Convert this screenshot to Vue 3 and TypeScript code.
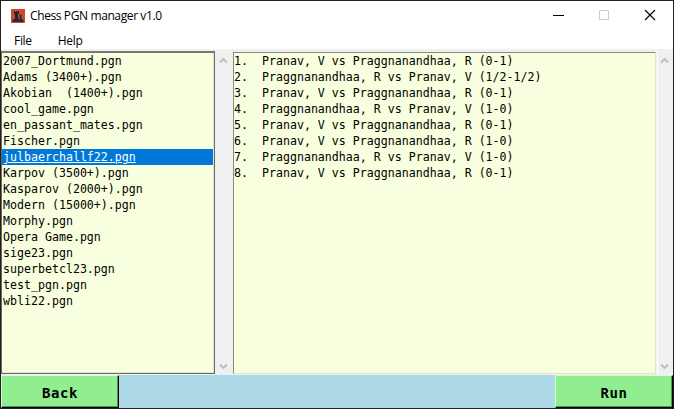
<script setup lang="ts">
import { ref } from 'vue'

const files: string[] = [
  '2007_Dortmund.pgn',
  'Adams (3400+).pgn',
  'Akobian  (1400+).pgn',
  'cool_game.pgn',
  'en_passant_mates.pgn',
  'Fischer.pgn',
  'julbaerchallf22.pgn',
  'Karpov (3500+).pgn',
  'Kasparov (2000+).pgn',
  'Modern (15000+).pgn',
  'Morphy.pgn',
  'Opera Game.pgn',
  'sige23.pgn',
  'superbetcl23.pgn',
  'test_pgn.pgn',
  'wbli22.pgn',
]
const games: string[] = [
  'Pranav, V vs Praggnanandhaa, R (0-1)',
  'Praggnanandhaa, R vs Pranav, V (1/2-1/2)',
  'Pranav, V vs Praggnanandhaa, R (0-1)',
  'Praggnanandhaa, R vs Pranav, V (1-0)',
  'Pranav, V vs Praggnanandhaa, R (0-1)',
  'Pranav, V vs Praggnanandhaa, R (1-0)',
  'Praggnanandhaa, R vs Pranav, V (1-0)',
  'Pranav, V vs Praggnanandhaa, R (0-1)',
]
const selected = ref<number>(6)
const gameLine = (game: string, i: number): string => `${i + 1}.  ${game}`
</script>

<template>
  <div class="window">
    <header class="titlebar">
      <svg class="logo" width="14" height="14" viewBox="0 0 14 14">
        <rect width="14" height="14" fill="#c94a2c" />
        <path d="M3 2h1v1h1V2h1v1h1V2h1v2.500L7 5.500v3L8 11H3l1-2.500v-3L3 4.500z" fill="#20232f" />
        <path d="M8.500 5.500h.7v.7h.8v-.7h.7v2l-.5.500v1l.8 2H8l.8-2V8l-.5-.5z" fill="#29283a" />
        <path d="M1.500 10.500h11V13h-11z" fill="#292a39" />
      </svg>
      <span class="title">Chess PGN manager v1.0</span>
      <div class="controls">
        <svg width="46" height="29" viewBox="0 0 46 29"><path d="M18 14.500h11" stroke="#000" /></svg>
        <svg width="46" height="29" viewBox="0 0 46 29"><path d="M18.500 9.500h9v9h-9z" stroke="#ccc" fill="none" /></svg>
        <svg width="46" height="29" viewBox="0 0 46 29"><path d="M18 9l10 10M28 9L18 19" stroke="#000" stroke-width="1.150" /></svg>
      </div>
    </header>
    <nav class="menu"><span>File</span><span>Help</span></nav>
    <main class="content">
      <ul class="panel files">
        <li v-for="(name, i) in files" :key="name" :class="{ active: i === selected }" @click="selected = i"><span>{{ name }}</span></li>
      </ul>
      <div class="scroll">
        <svg width="9" height="7" viewBox="0 0 9 7"><path d="M1 5.500L4.500 2 8 5.500" /></svg>
        <svg width="9" height="7" viewBox="0 0 9 7"><path d="M1 1.500L4.500 5 8 1.500" /></svg>
      </div>
      <ol class="panel games">
        <li v-for="(game, i) in games" :key="i">{{ gameLine(game, i) }}</li>
      </ol>
      <div class="scroll right">
        <svg width="9" height="7" viewBox="0 0 9 7"><path d="M1 5.500L4.500 2 8 5.500" /></svg>
        <svg width="9" height="7" viewBox="0 0 9 7"><path d="M1 1.500L4.500 5 8 1.500" /></svg>
      </div>
    </main>
    <footer class="actions">
      <button type="button">Back</button>
      <button type="button">Run</button>
    </footer>
  </div>
</template>

<style>
body { margin: 0; overflow: hidden; }
</style>

<style scoped>
* { box-sizing: border-box; }
.window {
  width: 674px;
  height: 409px;
  display: flex;
  flex-direction: column;
  border: 1px solid #231f20;
  background: #fff;
  color: #000;
}
.titlebar {
  height: 29px;
  display: flex;
  align-items: center;
  padding-left: 10px;
  font: 12px/16px "Open Sans", "Noto Sans", sans-serif;
}
.title { margin-left: 5px; letter-spacing: -0.39px; }
.controls { display: flex; margin-left: auto; }
.menu {
  height: 20px;
  display: flex;
  gap: 26px;
  padding: 3px 13px 0;
  border-bottom: 1px solid #f0f0f0;
  font: 12px/16px "Open Sans", "Noto Sans", sans-serif;
  letter-spacing: -0.3px;
}
.content {
  height: 325px;
  display: grid;
  grid-template-columns: 214px 18px 424px 15px;
  background: #f0f0f0;
}
.panel {
  margin: 0;
  padding: 0;
  list-style: none;
  background: #f8ffde;
  font: 11.627px/16px "DejaVu Sans Mono", monospace;
  white-space: pre;
  overflow: hidden;
}
.panel li { height: 16px; }
.files {
  margin: 1px 0;
  border: 1px solid #696969;
  border-top: 2px solid #777770;
  box-shadow: inset -1px -1px #e3e3d2;
}
.files li { margin-right: 1px; padding-left: 1px; }
.files .active { background: #0078d7; color: #fff; }
.files .active span { text-decoration: underline; text-underline-offset: 1px; }
.games {
  margin: 2px 1px 1px 0;
  border: 1px solid;
  border-color: #8b8b84 #e3e3d2 #e3e3d2 #8b8b84;
}
.scroll {
  display: flex;
  flex-direction: column;
  justify-content: space-between;
  align-items: center;
  padding: 7px 1px 5px 0;
}
.right { border-left: 1px solid #fff; }
.scroll path { fill: none; stroke: #bfbfbf; stroke-width: 2; }
.actions {
  height: 33px;
  display: flex;
  justify-content: space-between;
  background: #add8e6;
}
button {
  width: 118px;
  height: 33px;
  padding: 2px 0 0;
  border: 1px solid;
  border-color: #d5ffd3 #000 #000 #d5ffd3;
  border-radius: 0;
  background: #90ee90;
  box-shadow: inset -1px -1px #529653;
  color: #000;
  font: bold 14px/20px "DejaVu Sans Mono", monospace;
  letter-spacing: 0.58px;
}
</style>
